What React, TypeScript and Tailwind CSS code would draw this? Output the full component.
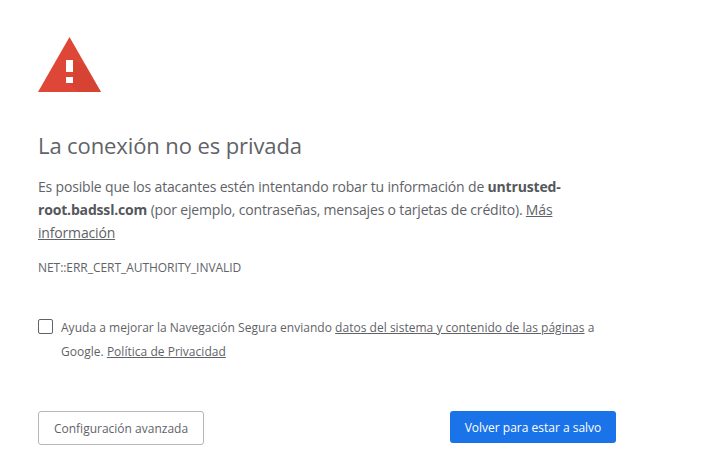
export default function App() {
  return (
    <div className="w-[711px] h-[474px] overflow-hidden bg-white text-[#5f6368] font-['Open_Sans','Noto_Sans',sans-serif]">
      <div className="w-[578px] ml-[38px] pt-[37px] flex flex-col">
        <svg width="64" height="56" viewBox="0 0 64 56" className="block">
          <polygon points="31.5,0 63,55 0,55" fill="#de4637" />
          <polygon points="35,22 35,40 31,46 40,55 63,55 48,29" fill="#c9402f" opacity="0.35" />
          <rect x="28" y="23" width="7" height="12" fill="#fff" />
          <rect x="28" y="40" width="7" height="6" fill="#fff" />
        </svg>
        <h1 className="mt-[36px] text-[22px] leading-[32px] font-normal tracking-[-0.1px]">La conexión no es privada</h1>
        <p className="mt-[14px] text-[14px] leading-[23px] tracking-[-0.17px]">
          Es posible que los atacantes estén intentando robar tu información de <b className="font-bold text-[#54575b]">untrusted-root.badssl.com</b> (por ejemplo, contraseñas, mensajes o tarjetas de crédito). <u>Más información</u>
        </p>
        <p className="mt-[16px] text-[12px] leading-[16px] tracking-[-0.05px]">NET::ERR_CERT_AUTHORITY_INVALID</p>
        <div className="mt-[43px] flex items-start">
          <span className="w-[15px] h-[15px] border border-[#5f6368] rounded-[2px] shrink-0" />
          <p className="ml-[8px] text-[12px] leading-[24px] -mt-[3px] tracking-[0.02px]">
            Ayuda a mejorar la Navegación Segura enviando <u>datos del sistema y contenido de las páginas</u> a Google. <u>Política de Privacidad</u>
          </p>
        </div>
        <div className="mt-[47px] flex justify-between items-start">
          <button className="w-[166px] h-[34px] pt-[2px] border border-[#b5b7ba] rounded-[3px] text-[12px] text-[#5f6368]">Configuración avanzada</button>
          <button className="w-[166px] h-[32px] pt-[2px] bg-[#1a73e8] rounded-[3px] text-[12px] text-white font-medium">Volver para estar a salvo</button>
        </div>
      </div>
    </div>
  );
}
